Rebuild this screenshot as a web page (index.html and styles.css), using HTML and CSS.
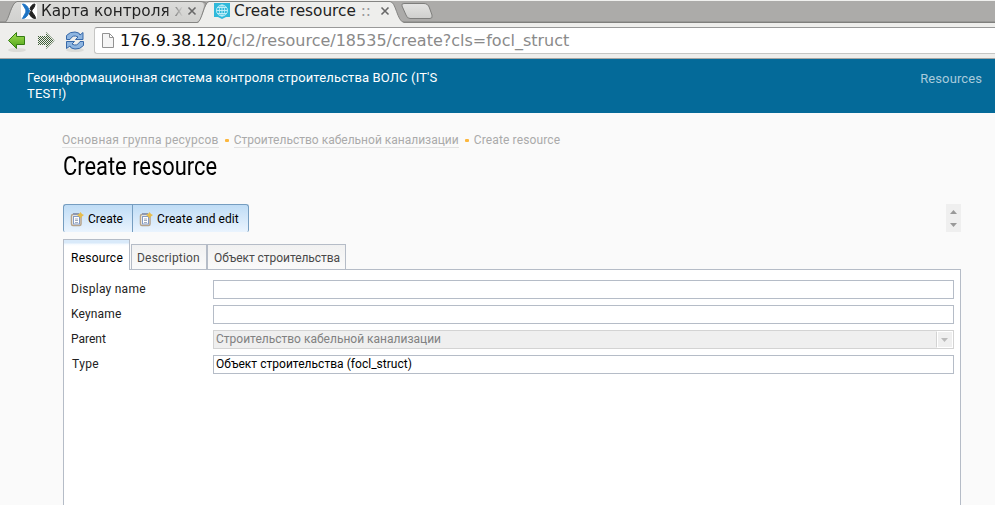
FILE: index.html
```html
<!DOCTYPE html>
<html lang="ru">
<head>
<meta charset="utf-8">
<title>Create resource</title>
<link rel="stylesheet" href="styles.css">
</head>
<body>
<div class="browser">
  <div class="tabstrip">
    <svg class="strip-art" width="440" height="27" viewBox="0 0 440 27">
      <defs>
        <linearGradient id="tabfill" x1="0" y1="0" x2="0" y2="1"><stop offset="0" stop-color="#dcdcda"/><stop offset="1" stop-color="#d0d0ce"/></linearGradient>
        <linearGradient id="newfill" x1="0" y1="0" x2="0" y2="1"><stop offset="0" stop-color="#e4e4e3"/><stop offset="1" stop-color="#cfcfcd"/></linearGradient>
      </defs>
      <path d="M5 22.500C9 20 12 3 17 1.500H199C204 2 205 4 203 10L199 22.500Z" fill="url(#tabfill)"/>
      <path d="M5 22.500C9 20 11 3 17 1.500H200Q206 1.500 207 5" fill="none" stroke="#858583"/>
      <path d="M194 27C202 24 204 1.500 210 1.500H390C396 1.500 397 22 405 22.500V27Z" fill="#eeeeec"/>
      <path d="M0 22.500H197C202 22 204 2 209 1.500H390C396 1.500 397 21.500 404 22.500H440" fill="none" stroke="#858583"/>
      <path d="M404 3.500H424Q428 3.500 429.500 8L432 15Q433 18.500 430 18.500H410Q407 18.500 406 15L402 6Q401 3.500 404 3.500Z" fill="url(#newfill)" stroke="#7e7e7c"/>
    </svg>
    <div class="btab first">
      <svg width="16" height="16" viewBox="0 0 16 16"><rect width="16" height="16" rx="2" fill="#fff"/><path d="M1.500 1C5 1 7 4 8.500 8C7 12 5 15.500 1.500 15.500C3 12 5 10 5 8C5 6 3 4 1.500 1Z" fill="#1c73c4" stroke="#1c73c4"/><path d="M14 1C11.500 1 10 3 9 5.500L10.500 8C12 5.500 14 4 14 1ZM9.500 8.500L8.500 11C10 14 11.500 15.500 14.500 15.500C14.500 12.500 12 11 10.500 8Z" fill="#222" stroke="#222"/></svg>
      <span class="btitle fade">Карта контроля х</span>
      <svg class="close" width="8" height="8" viewBox="0 0 8 8"><path d="M.5.500 7.500 7.500M7.500.500.500 7.500"/></svg>
    </div>
    <div class="btab second">
      <svg width="16" height="16" viewBox="0 0 16 16"><path d="M0 0H16V14L12 14 8 16 4 14 0 14Z" fill="#2fb9da"/><g fill="none" stroke="#c8f1fa" stroke-width=".9"><circle cx="8" cy="7.500" r="5.500"/><ellipse cx="8" cy="7.500" rx="2.700" ry="5.500"/><path d="M8 2V13M2.500 7.500H13.500M3.500 4.500H12.500M3.500 10.500H12.500"/></g></svg>
      <span class="btitle">Create resource <i>::</i></span>
      <svg class="close" width="8" height="8" viewBox="0 0 8 8"><path d="M.5.500 7.500 7.500M7.500.500.500 7.500"/></svg>
    </div>
  </div>
  <div class="navbar">
    <svg class="navicons" width="94" height="32" viewBox="0 0 94 32">
      <defs><linearGradient id="green" x1="0" y1="0" x2="0" y2="1"><stop offset="0" stop-color="#a5dd55"/><stop offset="1" stop-color="#4ca416"/></linearGradient>
      <pattern id="dither" width="2" height="2" patternUnits="userSpaceOnUse"><path d="M0 0H1V1H0ZM1 1H2V2H1Z" fill="#3f5f37"/></pattern></defs>
      <ellipse cx="17" cy="22" rx="9" ry="2" fill="#dcdcd8"/><ellipse cx="75" cy="22" rx="9" ry="2" fill="#dcdcd8"/>
      <path d="M8.500 12.500 16.500 4.500V8.500H24.500V16.500H16.500V20.500Z" fill="url(#green)" stroke="#347c12"/>
      <path d="M54.500 12.500 46 4V8H38V17H46V21Z" fill="url(#dither)"/>
      <g fill="#8eb5e0" stroke="#3768a8" stroke-width="1"><path d="M66.500 11.500V7.500Q70 3.500 75 4T80 7L83 4.500V11.500H75.500L78 9Q73 6 70 11.500Z"/><path d="M83.500 13.500V17.500Q80 21.500 75 21T70 18L66.500 20.500V13.500H74.500L72 16Q77 19 80 13.500Z"/></g>
    </svg>
    <div class="address">
      <svg width="12" height="15" viewBox="0 0 12 15"><path d="M.5.500H7.500L11.500 4.500V14.500H.5ZM7.500.500V4.500H11.500" fill="#f5f5f5" stroke="#929292"/></svg>
      <span class="url"><b>176.9.38.120</b>/cl2/resource/18535/create?cls=focl_struct</span>
    </div>
  </div>
</div>
<header class="header">
  <div class="brand">Геоинформационная система контроля строительства ВОЛС (IT'S TEST!)</div>
  <a class="menu">Resources</a>
</header>
<main class="content">
  <nav class="crumbs"><a class="c1">Основная группа ресурсов</a><span class="dot"></span><a class="c2">Строительство кабельной канализации</a><span class="dot"></span><span class="c3">Create resource</span></nav>
  <h1><span>Create resource</span></h1>
  <div class="actions">
    <div class="buttons">
      <button class="b1"><svg width="14" height="15" viewBox="0 0 14 15"><rect x="1.500" y="2.500" width="9.500" height="11" rx="1.500" fill="#f8f8f5" stroke="#b5a38b" stroke-width="1.500"/><rect x="3.500" y="4.500" width="6" height="7.500" fill="#fff" stroke="#829ac6"/><path d="M5 7H8M5 8.500H8M5 10.500H8" stroke="#8c98ad" stroke-width=".8"/><rect x="3" y="1" width="6" height="2" fill="#8d98b0"/><path d="M10.500 0 12 2 14 3 12 4.500 10.500 6.500 9 4.500 7 3 9 2Z" fill="#e6bd4d"/></svg><span>Create</span></button>
      <button class="b2"><svg width="14" height="15" viewBox="0 0 14 15"><rect x="1.500" y="2.500" width="9.500" height="11" rx="1.500" fill="#f8f8f5" stroke="#b5a38b" stroke-width="1.500"/><rect x="3.500" y="4.500" width="6" height="7.500" fill="#fff" stroke="#829ac6"/><path d="M5 7H8M5 8.500H8M5 10.500H8" stroke="#8c98ad" stroke-width=".8"/><rect x="3" y="1" width="6" height="2" fill="#8d98b0"/><path d="M10.500 0 12 2 14 3 12 4.500 10.500 6.500 9 4.500 7 3 9 2Z" fill="#e6bd4d"/></svg><span>Create and edit</span></button>
    </div>
    <svg class="spinner" width="15" height="28" viewBox="0 0 15 28"><path d="M4 10 7.500 6 11 10ZM4 19H11L7.500 23Z" fill="#999"/></svg>
  </div>
  <div class="tabs">
    <div class="tab active"><span class="t1">Resource</span></div>
    <div class="tab tab2"><span class="t2">Description</span></div>
    <div class="tab tab3"><span class="t3">Объект строительства</span></div>
  </div>
  <section class="panel">
    <div class="row"><label class="l1">Display name</label><div class="field"></div></div>
    <div class="row"><label class="l2">Keyname</label><div class="field"></div></div>
    <div class="row"><label class="l3">Parent</label><div class="field disabled"><span class="v1">Строительство кабельной канализации</span><div class="drop"><svg width="7" height="4" viewBox="0 0 7 4"><path d="M0 0H7L3.500 4Z" fill="#bbb"/></svg></div></div></div>
    <div class="row"><label class="l4">Type</label><div class="field"><span class="v2">Объект строительства (focl_struct)</span></div></div>
  </section>
</main>
</body>
</html>
```
FILE: styles.css
```css
* { box-sizing: border-box; }
body { margin: 0; width: 995px; height: 505px; overflow: hidden; background: #fafafa; font: 12px/16px Roboto, sans-serif; color: #000; display: flex; flex-direction: column; }
svg { display: block; flex: none; }
.browser { height: 59px; flex: none; background: #eeeeec; border-bottom: 1px solid #a5a5a3; font-family: "DejaVu Sans", sans-serif; }
.tabstrip { position: relative; height: 23px; background: linear-gradient(#f0f0ee 0 1px, #acaba9 1px 21px, #989896 21px 22px, #7f7f7d 22px); display: flex; }
.strip-art { position: absolute; left: 0; top: 0; }
.btab { position: relative; display: flex; align-items: center; height: 22px; }
.first { margin-left: 21px; width: 193px; }
.second { width: 180px; }
.btitle { font-size: 15.3px; line-height: 22px; margin-left: 4px; width: 142px; white-space: nowrap; color: #222; overflow: hidden; }
.fade { -webkit-mask-image: linear-gradient(90deg, #000 88%, transparent); mask-image: linear-gradient(90deg, #000 88%, transparent); }
.btitle i { font-style: normal; color: #999; }
.close { margin-left: 5px; fill: none; stroke: #686868; stroke-width: 1.6; overflow: visible; }
.navbar { display: flex; height: 35px; padding-top: 4px; position: relative; }
.navicons { margin-top: 1px; }
.address { flex: 1; height: 27px; background: #fff; border: 1px solid #c6c6c4; border-top-color: #999; border-right: 0; border-radius: 3px 0 0 3px; display: flex; align-items: center; padding-left: 7px; }
.url { margin-left: 6px; font-size: 16px; line-height: 20px; color: #8a8a8a; white-space: nowrap; }
.url b { font-weight: 400; color: #111; }
.header { height: 54px; flex: none; background: #046a99; padding: 11px 13px 0 27px; display: flex; justify-content: space-between; color: #fff; font-size: 13px; }
.brand { width: 425px; letter-spacing: .14px; }
.menu { color: #a8cbdc; padding-top: 1px; letter-spacing: .1px; }
.content { flex: 1; padding: 19px 34px 0 63px; display: flex; flex-direction: column; }
.crumbs { display: flex; align-items: flex-start; color: #aaa; height: 17px; white-space: nowrap; margin-left: -1px; }
.crumbs a { border-bottom: 1px solid #e2e2e2; height: 16px; }
.c1 { letter-spacing: .25px; }
.c3 { letter-spacing: .14px; }
.dot { width: 4px; height: 3px; border-radius: 1px; background: #fcb73e; margin: 7px 5px 0 6px; }
h1 { font-size: 25px; line-height: 32px; font-weight: 400; margin: 2px 0 0; height: 32px; }
h1 span { display: inline-block; transform: scaleX(.875); transform-origin: 0 0; white-space: nowrap; }
.actions { display: flex; justify-content: space-between; margin-top: 21px; height: 28px; }
.buttons { display: flex; }
button { font: 12px/16px Roboto, sans-serif; display: flex; align-items: center; height: 28px; padding: 1px 0 0 6px; border: 1px solid #759dc0; border-bottom: 0; background: linear-gradient(#bfdcf5, #eaf4fe); color: #000; white-space: nowrap; }
.b1 { width: 69px; border-radius: 3px 0 0 2px; border-right: 0; }
.b2 { width: 117px; border-radius: 0 3px 2px 0; }
button span { margin-left: 4px; }
.b2 span { letter-spacing: .07px; }
.spinner { background: #efefef; }
.tabs { display: flex; align-items: flex-end; height: 31px; margin-top: 7px; position: relative; z-index: 1; margin-bottom: -1px; }
.tab { height: 26px; border: 1px solid #b5bcc7; background: linear-gradient(#f1f1f1, #fafafa); color: #494949; padding: 5px 5px 0; white-space: nowrap; }
.tab.active { width: 67px; height: 31px; background: linear-gradient(#d9eafa 0 3px, #f4f9fe 4px, #fff 6px); border-bottom: 0; color: #000; padding: 10px 7px 0; }
.t1 { letter-spacing: .25px; }
.tab2 { width: 76px; margin-left: 1px; }
.t2 { letter-spacing: .2px; }
.tab3 { width: 139px; margin-left: 0; padding-left: 6px; }
.t3 { letter-spacing: -.05px; }
.panel { flex: 1; background: #fff; border: 1px solid #b5bcc7; border-bottom: 0; padding: 10px 6px 0 7px; display: flex; flex-direction: column; gap: 6px; }
.row { display: flex; height: 19px; color: #222; }
.row label { width: 142px; white-space: nowrap; line-height: 18px; }
.l1 { letter-spacing: .25px; }
.l2 { letter-spacing: .15px; }
.row .l4 { letter-spacing: .4px; padding-left: 1px; }
.field { flex: 1; border: 1px solid #b5bcc7; background: #fff; padding: 0 2px; line-height: 17px; color: #000; white-space: nowrap; }
.v2 { letter-spacing: .03px; }
.disabled { display: flex; justify-content: space-between; background: #efefef; border-color: #d3d3d3; color: #818181; padding-right: 0; }
.drop { width: 17px; border: 1px solid #fff; border-left: 1px solid #d3d3d3; box-shadow: inset 1px 0 #fff; display: flex; align-items: center; justify-content: center; }
```
